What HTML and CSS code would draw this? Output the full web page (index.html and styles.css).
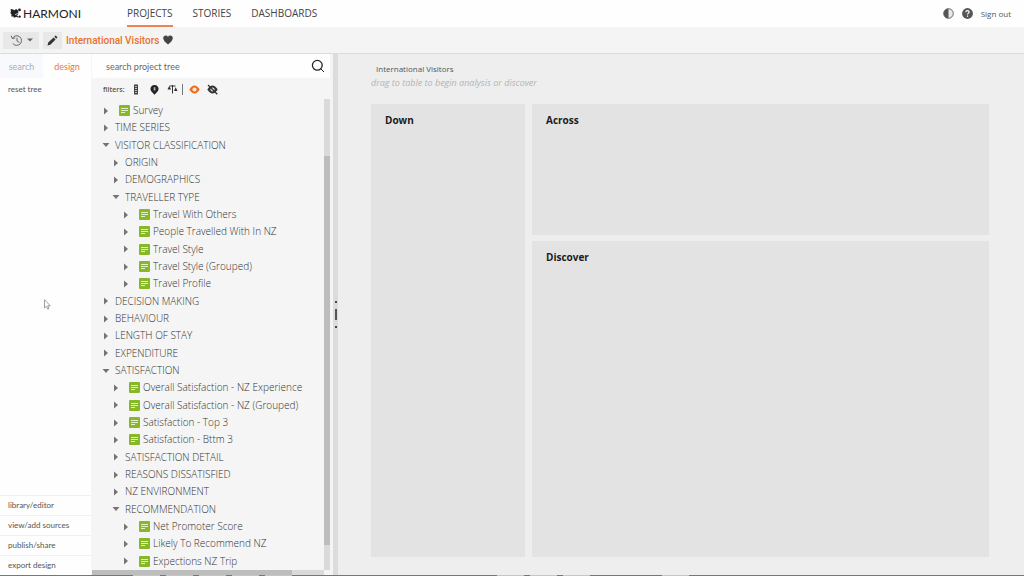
FILE: index.html
```html
<!DOCTYPE html>
<html lang="en">
<head>
<meta charset="utf-8">
<title>Harmoni - International Visitors</title>
<link rel="stylesheet" href="styles.css">
</head>
<body>
<svg class="defs" aria-hidden="true">
  <symbol id="right" viewBox="0 0 6 8"><path d="M1 0.5L5 4L1 7.5Z" fill="#747474"/></symbol>
  <symbol id="down" viewBox="0 0 8 6"><path d="M0.5 1H7.5L4 5Z" fill="#747474"/></symbol>
  <symbol id="doc" viewBox="0 0 11 11"><rect width="11" height="11" rx="1" fill="#86b82a"/><path d="M2 3.5H9M2 5.5H9M2 7.5H6" stroke="#e4f0c8"/></symbol>
</svg>
<div class="app">
  <header class="header">
    <a class="logo" href="#"><svg class="mark" viewBox="0 0 11 11"><path d="M.8 3.5L2.6 1.2L4.4 2.2L6.2 1L8 2.4L8.6 5L7.6 7.6L8.4 9.6L6 9L4 9.8L3.4 8.6L1.2 8.4L1.6 6.6L.4 5.2Z" fill="#222"/><circle cx="1.5" cy="2" r="1" fill="#222"/><circle cx="9.5" cy="1.9" r="1.4" fill="#222"/><circle cx="9.6" cy="8.6" r="1.2" fill="#222"/><path d="M5 6.8L9.6 4.6M6.6 7.9L9.2 6.4" stroke="#fff" stroke-width=".7"/></svg>HARMONI</a>
    <nav class="nav"><a class="current" href="#">PROJECTS</a><a href="#">STORIES</a><a href="#">DASHBOARDS</a></nav>
    <div class="account">
      <button class="plain" aria-label="Contrast"><svg width="11" height="11" viewBox="0 0 11 11"><circle cx="5.5" cy="5.5" r="4.8" fill="#e8e8e8" stroke="#666"/><path d="M5.5 .7A4.8 4.8 0 0 0 5.5 10.3Z" fill="#555"/></svg></button>
      <button class="plain" aria-label="Help"><svg width="11" height="11" viewBox="0 0 11 11"><circle cx="5.5" cy="5.5" r="5.4" fill="#555"/><path d="M3.9 4.2C3.9 2 7.2 2.2 7.1 4.1C7 5.1 5.5 5.3 5.5 6.6M5.5 7.6V8.8" fill="none" stroke="#fff" stroke-width="1.2"/></svg></button>
      <a href="#">Sign out</a>
    </div>
  </header>

  <div class="toolbar">
    <button class="tool history" aria-label="History"><svg width="13" height="13" viewBox="0 0 13 13" fill="none" stroke="#666"><path d="M2.6 4A4.8 4.8 0 1 1 2.8 9.4M1.2 1.8L2.4 4.6L5.2 4M7 3.8V7L9.3 8.4"/></svg><svg width="6" height="4" viewBox="0 0 6 4"><path d="M0 .5H6L3 3.5Z" fill="#666"/></svg></button>
    <button class="tool" aria-label="Edit"><svg width="11" height="11" viewBox="0 0 11 11" fill="#333"><path d="M.5 10.5L1.2 7.6L6.6 2.4L8.6 4.4L3.3 9.8ZM7.3 1.8L8.7 .5L10.5 2.3L9.2 3.7Z"/></svg></button>
    <h1>International Visitors</h1>
    <svg width="10" height="10" viewBox="0 0 10 10"><path d="M5 9.6C2 7 .2 5.2 .2 3C.2 .4 3.8-.3 5 2C6.2-.3 9.8 .4 9.8 3C9.8 5.2 8 7 5 9.6Z" fill="#444"/></svg>
  </div>

  <div class="body">
    <aside class="side">
      <div class="tabs"><button class="tab">search</button><button class="tab active">design</button></div>
      <button class="reset">reset tree</button>
      <nav class="links"><a href="#">library/editor</a><a href="#">view/add sources</a><a href="#">publish/share</a><a href="#">export design</a></nav>
      <svg class="pointer" width="7" height="11" viewBox="0 0 7 11"><path d="M.5 .7V9L2.5 7.2L3.8 10.2L5 9.7L3.8 6.8H6.3Z" fill="#fff" stroke="#888" stroke-width=".8"/></svg>
    </aside>

    <section class="browser">
      <label class="search"><input type="text" placeholder="search project tree" aria-label="search project tree"><svg width="14" height="14" viewBox="0 0 14 14" fill="none" stroke="#222"><circle cx="6.3" cy="6.3" r="4.9" stroke-width="1.3"/><path d="M10 10L13 13"/></svg></label>
      <div class="filters">
        <span>filters:</span>
        <button class="plain" aria-label="Measures"><svg width="11" height="11" viewBox="0 0 11 11"><path d="M3 .5H7V10.5H3Z" fill="#444"/><path d="M4 2.5H6M4 4.5H6M4 6.5H6M4 8.5H6" stroke="#ddd" stroke-width=".8"/></svg></button>
        <button class="plain" aria-label="Location"><svg width="11" height="11" viewBox="0 0 11 11"><path d="M5.5 10.8L3.2 8.2A4 4 0 1 1 7.8 8.2Z" fill="#222"/><path d="M4.6 3.2H6.5V6.5H4.6Z" fill="#aaa"/></svg></button>
        <button class="plain" aria-label="Weights"><svg width="11" height="11" viewBox="0 0 11 11"><path d="M2.5 2H8.5M5.5 1V9.5" stroke="#333"/><path d="M.5 5.5L2.3 1.8L4 5.5ZM7 7L8.7 3.3L10.5 7Z" fill="#333"/></svg></button>
        <button class="plain divided" aria-label="Show visible"><svg width="11" height="11" viewBox="0 0 11 11"><path d="M.3 5.5Q5.5-2.6 10.7 5.5Q5.5 13.6 .3 5.5Z" fill="#ec6a1e"/><circle cx="5.5" cy="5.5" r="2.1" fill="#f9e9df"/></svg></button>
        <button class="plain" aria-label="Show hidden"><svg width="11" height="11" viewBox="0 0 11 11"><path d="M.3 5.5Q5.5-2.6 10.7 5.5Q5.5 13.6 .3 5.5Z" fill="#333"/><circle cx="5.5" cy="5.5" r="2.1" fill="#ddd"/><path d="M1 1L10.3 10.3" stroke="#333" stroke-width="1.3"/></svg></button>
      </div>
      <div class="scroller">
        <ul class="tree" role="tree">
          <li class="l1" role="treeitem"><svg class="arrow"><use href="#right"/></svg><svg class="doc"><use href="#doc"/></svg>Survey</li>
          <li class="l1" role="treeitem"><svg class="arrow"><use href="#right"/></svg>TIME SERIES</li>
          <li class="l1" role="treeitem"><svg class="arrow"><use href="#down"/></svg>VISITOR CLASSIFICATION</li>
          <li class="l2" role="treeitem"><svg class="arrow"><use href="#right"/></svg>ORIGIN</li>
          <li class="l2" role="treeitem"><svg class="arrow"><use href="#right"/></svg>DEMOGRAPHICS</li>
          <li class="l2" role="treeitem"><svg class="arrow"><use href="#down"/></svg>TRAVELLER TYPE</li>
          <li class="l3" role="treeitem"><svg class="arrow"><use href="#right"/></svg><svg class="doc"><use href="#doc"/></svg>Travel With Others</li>
          <li class="l3" role="treeitem"><svg class="arrow"><use href="#right"/></svg><svg class="doc"><use href="#doc"/></svg>People Travelled With In NZ</li>
          <li class="l3" role="treeitem"><svg class="arrow"><use href="#right"/></svg><svg class="doc"><use href="#doc"/></svg>Travel Style</li>
          <li class="l3" role="treeitem"><svg class="arrow"><use href="#right"/></svg><svg class="doc"><use href="#doc"/></svg>Travel Style (Grouped)</li>
          <li class="l3" role="treeitem"><svg class="arrow"><use href="#right"/></svg><svg class="doc"><use href="#doc"/></svg>Travel Profile</li>
          <li class="l1" role="treeitem"><svg class="arrow"><use href="#right"/></svg>DECISION MAKING</li>
          <li class="l1" role="treeitem"><svg class="arrow"><use href="#right"/></svg>BEHAVIOUR</li>
          <li class="l1" role="treeitem"><svg class="arrow"><use href="#right"/></svg>LENGTH OF STAY</li>
          <li class="l1" role="treeitem"><svg class="arrow"><use href="#right"/></svg>EXPENDITURE</li>
          <li class="l1" role="treeitem"><svg class="arrow"><use href="#down"/></svg>SATISFACTION</li>
          <li class="l2" role="treeitem"><svg class="arrow"><use href="#right"/></svg><svg class="doc"><use href="#doc"/></svg>Overall Satisfaction - NZ Experience</li>
          <li class="l2" role="treeitem"><svg class="arrow"><use href="#right"/></svg><svg class="doc"><use href="#doc"/></svg>Overall Satisfaction - NZ (Grouped)</li>
          <li class="l2" role="treeitem"><svg class="arrow"><use href="#right"/></svg><svg class="doc"><use href="#doc"/></svg>Satisfaction - Top 3</li>
          <li class="l2" role="treeitem"><svg class="arrow"><use href="#right"/></svg><svg class="doc"><use href="#doc"/></svg>Satisfaction - Bttm 3</li>
          <li class="l2" role="treeitem"><svg class="arrow"><use href="#right"/></svg>SATISFACTION DETAIL</li>
          <li class="l2" role="treeitem"><svg class="arrow"><use href="#right"/></svg>REASONS DISSATISFIED</li>
          <li class="l2" role="treeitem"><svg class="arrow"><use href="#right"/></svg>NZ ENVIRONMENT</li>
          <li class="l2" role="treeitem"><svg class="arrow"><use href="#down"/></svg>RECOMMENDATION</li>
          <li class="l3" role="treeitem"><svg class="arrow"><use href="#right"/></svg><svg class="doc"><use href="#doc"/></svg>Net Promoter Score</li>
          <li class="l3" role="treeitem"><svg class="arrow"><use href="#right"/></svg><svg class="doc"><use href="#doc"/></svg>Likely To Recommend NZ</li>
          <li class="l3" role="treeitem"><svg class="arrow"><use href="#right"/></svg><svg class="doc"><use href="#doc"/></svg>Expections NZ Trip</li>
        </ul>
        <div class="vbar"><div class="vthumb"></div></div>
      </div>
      <div class="hbar"><div class="hthumb"></div></div>
    </section>

    <div class="splitter" role="separator"><i class="dot"></i><i class="grip"></i><i class="dot"></i></div>

    <main class="main">
      <h2>International Visitors</h2>
      <p class="hint">drag to table to begin analysis or discover</p>
      <div class="zones">
        <section class="zone tall"><h3>Down</h3></section>
        <section class="zone"><h3>Across</h3></section>
        <section class="zone"><h3>Discover</h3></section>
      </div>
    </main>
  </div>
  <footer class="strip"><i></i><i></i><i></i><i></i><i></i><i></i><i></i><i></i><i></i></footer>
</div>
</body>
</html>
```
FILE: styles.css
```css
* { box-sizing: border-box; }
body { margin: 0; font-family: "Open Sans", "Noto Sans", sans-serif; font-size: 10px; color: #555; }
h1, h2, h3, p, ul { margin: 0; padding: 0; }
a { color: inherit; text-decoration: none; }
button { font: inherit; color: inherit; border: 0; padding: 0; background: none; }
svg { display: block; flex: none; }
.defs { position: absolute; width: 0; height: 0; }
.app { display: flex; flex-direction: column; height: 100vh; overflow: hidden; background: #fefefe; }

.header { display: flex; height: 27px; flex: none; padding: 0 13px 0 10px; }
.logo { display: flex; align-items: center; gap: 2px; width: 117px; font: 12px Lato, sans-serif; color: #222; }
.mark { width: 11px; height: 11px; }
.nav { display: flex; gap: 20px; font-size: 10px; line-height: 27px; color: #444; }
.nav .current { border-bottom: 2px solid #ee8450; }
.account { display: flex; align-items: center; gap: 8px; margin-left: auto; font-size: 8px; color: #555; }
.plain { display: flex; }

.toolbar { display: flex; align-items: center; gap: 4px; height: 27px; flex: none; padding: 0 3px; background: #f4f4f5; border-bottom: 1px solid #dcdce0; }
.tool { display: flex; align-items: center; justify-content: center; width: 19px; height: 17px; background: #e8e8e8; }
.history { width: 36px; gap: 4px; }
.toolbar h1 { font-family: Roboto, sans-serif; font-size: 10px; font-weight: 500; color: #e8702a; }

.body { display: flex; flex: 1; min-height: 0; }
.side { position: relative; display: flex; flex-direction: column; width: 92px; flex: none; font-family: Lato, sans-serif; font-size: 8px; border-right: 1px solid #f6f6f6; }
.tabs { display: flex; height: 24px; flex: none; font-size: 9px; }
.tab { width: 43px; background: #f8f9fc; color: #a9aeb4; }
.tab.active { flex: 1; background: #fefefe; color: #e5783a; }
.reset { height: 22px; padding-left: 8px; text-align: left; }
.links { display: flex; flex-direction: column; margin-top: auto; line-height: 19px; }
.links a { padding-left: 8px; border-top: 1px solid #f1f1f1; }
.pointer { position: absolute; left: 44px; top: 245px; }

.browser { display: flex; flex-direction: column; width: 238px; flex: none; background: #f5f5f5; }
.search { display: flex; align-items: center; height: 24px; flex: none; padding: 0 5px 0 14px; background: #fefefe; font-family: Lato, sans-serif; font-size: 9px; }
.search input { flex: 1; min-width: 0; padding: 0; border: 0; outline: 0; background: none; font: inherit; }
.search input::placeholder { color: #686868; opacity: 1; }
.filters { display: flex; align-items: center; height: 21px; flex: none; gap: 7px; padding: 2px 0 0 11px; font-size: 7px; font-weight: 600; }
.filters span { width: 21px; }
.divided { border-left: 1px solid #777; margin-left: -3px; padding-left: 6px; }
.scroller { display: flex; flex: 1; min-height: 0; }
.tree { display: grid; grid-auto-rows: 1fr; flex: 1; min-height: 0; padding-top: 3px; font-size: 10px; font-weight: 300; line-height: 17px; color: #333; list-style: none; }
.tree li { display: flex; align-items: center; min-height: 0; white-space: nowrap; }
.arrow { width: 8px; height: 8px; margin-right: 5px; }
.doc { width: 11px; height: 11px; margin: 0 3px 0 4px; }
.l1 { padding-left: 10px; }
.l2 { padding-left: 20px; }
.l3 { padding-left: 30px; }
.vbar { width: 6px; padding-top: 57px; background: #dadada; }
.vthumb { height: 94%; background: #bdbdbd; }
.hbar { height: 5px; flex: none; margin-right: 6px; background: #dadada; }
.hthumb { width: 86%; height: 5px; background: #bdbdbd; }

.splitter { display: flex; flex-direction: column; align-items: center; justify-content: center; gap: 6px; width: 8px; flex: none; padding-left: 3px; background: linear-gradient(to right, #f4f4f4 3px, #dcdce0 3px); }
.dot { width: 2px; height: 2px; background: #444; }
.grip { width: 2px; height: 11px; background: #555; }

.main { display: flex; flex-direction: column; flex: 1; min-width: 0; padding: 8px 35px 18px 33px; background: #eeeeee; }
.main h2 { padding-left: 5px; font-size: 8px; font-weight: 400; line-height: 14px; }
.hint { font-size: 9px; font-style: italic; line-height: 14px; color: #b4b4b4; }
.zones { display: grid; grid-template-columns: 154fr 457fr; grid-template-rows: 131fr 316fr; gap: 6px 7px; flex: 1; margin-top: 14px; }
.zone { padding: 8px 14px; background: #e3e3e3; }
.tall { grid-row: span 2; }
.zone h3 { font-size: 10px; line-height: 16px; color: #1c1c1c; }

.strip { display: flex; gap: 6px; height: 1px; flex: none; padding-left: 133px; background: #777; }
.strip i { width: 27px; background: #a9cfe6; }
.strip i:nth-child(6) { margin-left: 199px; }
.strip i:nth-child(9) { margin-left: 66px; }
```
